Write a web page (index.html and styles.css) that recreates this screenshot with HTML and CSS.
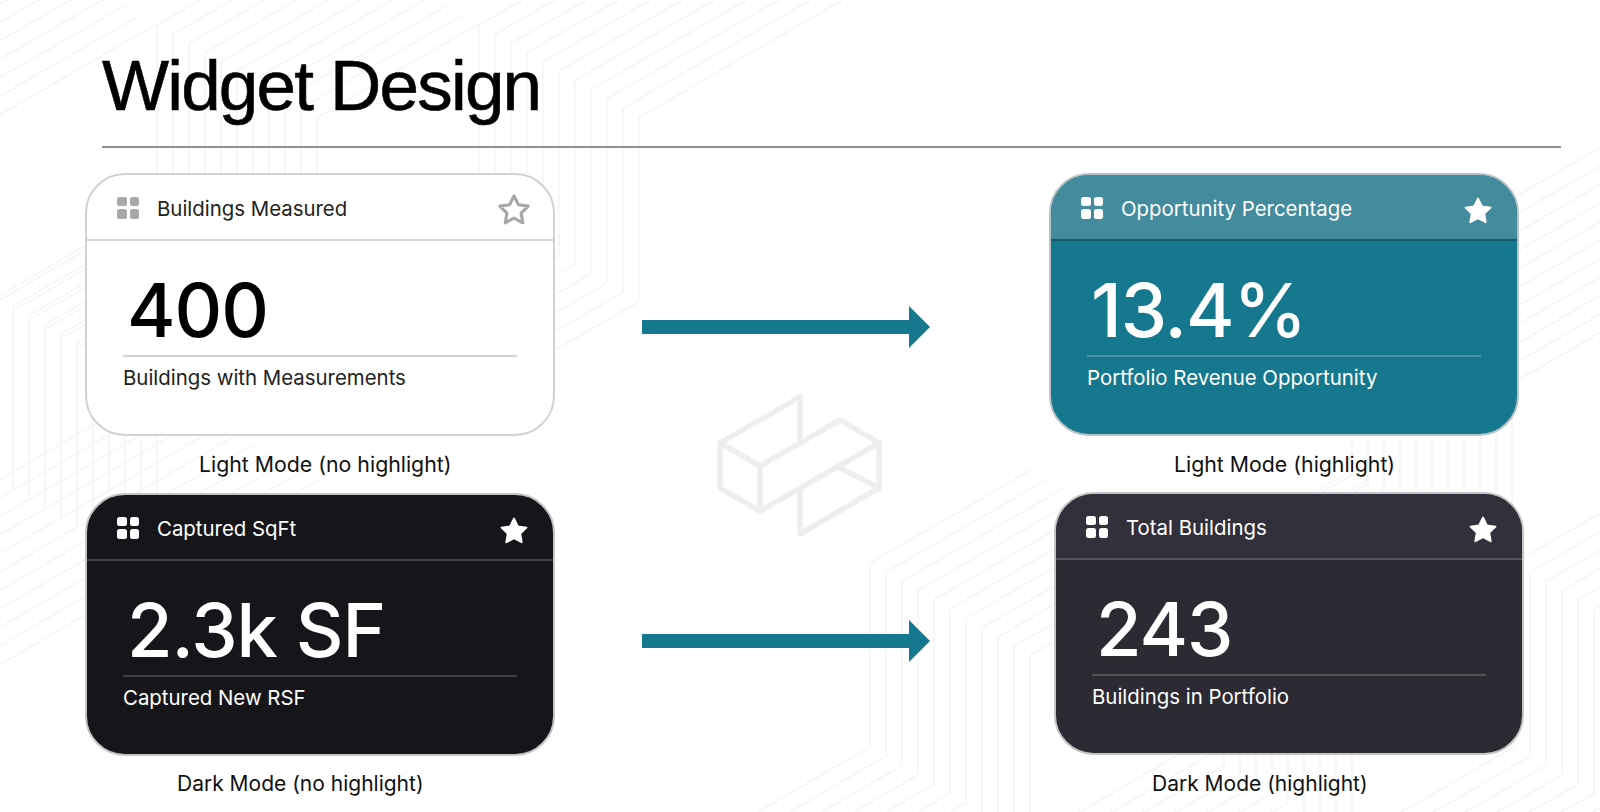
FILE: index.html
```html
<!DOCTYPE html>
<html>
<head>
    <title>Widget Design</title>
    <link rel="stylesheet" href="styles.css">
</head>
<body>
    <!-- background line pattern: one zigzag, repeated into bands of 11 -->
    <svg class="backdrop" width="1600" height="812" viewBox="0 0 1600 812">
        <defs>
            <polyline id="zig" points="161,-93 0,0 0,184 -161,277"/>
            <polyline id="zigLong" points="483,-279 0,0 0,184 -161,277"/>
            <polyline id="tail" points="161,-93 0,0"/>
            <g id="band">
                <use href="#zig"/><use href="#zig" x="16" y="9.25"/><use href="#zig" x="32" y="18.5"/>
                <use href="#zig" x="48" y="27.75"/><use href="#zig" x="64" y="37"/><use href="#zig" x="80" y="46.25"/>
                <use href="#zig" x="96" y="55.5"/><use href="#zig" x="112" y="64.75"/><use href="#zig" x="128" y="74"/>
                <use href="#zig" x="144" y="83.25"/><use href="#zig" x="160" y="92.5"/>
            </g>
            <g id="bandLong">
                <use href="#zigLong"/><use href="#zigLong" x="16" y="9.25"/><use href="#zigLong" x="32" y="18.5"/>
                <use href="#zigLong" x="48" y="27.75"/><use href="#zigLong" x="64" y="37"/><use href="#zigLong" x="80" y="46.25"/>
                <use href="#zigLong" x="96" y="55.5"/><use href="#zigLong" x="112" y="64.75"/><use href="#zigLong" x="128" y="74"/>
                <use href="#zigLong" x="144" y="83.25"/><use href="#zigLong" x="160" y="92.5"/>
            </g>
            <g id="bandTail">
                <use href="#tail"/><use href="#tail" x="16" y="9.25"/><use href="#tail" x="32" y="18.5"/>
                <use href="#tail" x="48" y="27.75"/><use href="#tail" x="64" y="37"/><use href="#tail" x="80" y="46.25"/>
                <use href="#tail" x="96" y="55.5"/><use href="#tail" x="112" y="64.75"/><use href="#tail" x="128" y="74"/>
                <use href="#tail" x="144" y="83.25"/><use href="#tail" x="160" y="92.5"/>
            </g>
        </defs>
        <g class="backdrop-lines">
            <use href="#band" x="-165" y="25"/>
            <use href="#band" x="157" y="25"/>
            <use href="#bandLong" x="479" y="25"/>
            <use href="#band" x="-3" y="297"/>
            <use href="#bandTail" x="-3" y="481"/>
            <use href="#band" x="870" y="563"/>
            <use href="#band" x="1192" y="563"/>
            <use href="#band" x="1514" y="563"/>
            <use href="#bandLong" x="1352" y="291"/>
        </g>
        <!-- faded logo -->
        <g class="backdrop-logo">
            <path d="M800 443V397L720 443V488L760 511V466L720 443"/>
            <path d="M760 466L840 420L879 443L760 511"/>
            <path d="M879 443V488L800 534V488"/>
            <path d="M840 468L879 488"/>
        </g>
    </svg>

    <main class="page">
        <header class="page-head">
            <h1>Widget Design</h1>
        </header>

        <section class="row row-first">
            <div class="cell">
                <article class="card card-light">
                    <div class="card-head">
                        <span class="grid-icon"><i></i><i></i><i></i><i></i></span>
                        <span class="card-title">Buildings Measured</span>
                        <svg class="star star-outline" viewBox="0 0 24 24"><polygon points="12,2 15.09,8.26 22,9.27 17,14.14 18.18,21.02 12,17.77 5.82,21.02 7,14.14 2,9.27 8.91,8.26"/></svg>
                    </div>
                    <div class="card-body">
                        <div class="value">400</div>
                        <div class="caption">Buildings with Measurements</div>
                    </div>
                </article>
                <p class="label label-a">Light Mode (no highlight)</p>
            </div>

            <svg class="arrow arrow-first" width="288" height="42" viewBox="0 0 288 42"><path d="M0 14H267V0L288 21L267 42V28H0Z"/></svg>

            <div class="cell">
                <article class="card card-teal">
                    <div class="card-head">
                        <span class="grid-icon"><i></i><i></i><i></i><i></i></span>
                        <span class="card-title">Opportunity Percentage</span>
                        <svg class="star" viewBox="0 0 24 24"><polygon points="12,2 15.09,8.26 22,9.27 17,14.14 18.18,21.02 12,17.77 5.82,21.02 7,14.14 2,9.27 8.91,8.26"/></svg>
                    </div>
                    <div class="card-body">
                        <div class="value">13.4%</div>
                        <div class="caption">Portfolio Revenue Opportunity</div>
                    </div>
                </article>
                <p class="label label-b">Light Mode (highlight)</p>
            </div>
        </section>

        <section class="row">
            <div class="cell">
                <article class="card card-dark">
                    <div class="card-head">
                        <span class="grid-icon"><i></i><i></i><i></i><i></i></span>
                        <span class="card-title">Captured SqFt</span>
                        <svg class="star" viewBox="0 0 24 24"><polygon points="12,2 15.09,8.26 22,9.27 17,14.14 18.18,21.02 12,17.77 5.82,21.02 7,14.14 2,9.27 8.91,8.26"/></svg>
                    </div>
                    <div class="card-body">
                        <div class="value">2.3k SF</div>
                        <div class="caption">Captured New RSF</div>
                    </div>
                </article>
                <p class="label label-c">Dark Mode (no highlight)</p>
            </div>

            <svg class="arrow arrow-second" width="288" height="42" viewBox="0 0 288 42"><path d="M0 14H267V0L288 21L267 42V28H0Z"/></svg>

            <div class="cell cell-shift">
                <article class="card card-slate">
                    <div class="card-head">
                        <span class="grid-icon"><i></i><i></i><i></i><i></i></span>
                        <span class="card-title">Total Buildings</span>
                        <svg class="star" viewBox="0 0 24 24"><polygon points="12,2 15.09,8.26 22,9.27 17,14.14 18.18,21.02 12,17.77 5.82,21.02 7,14.14 2,9.27 8.91,8.26"/></svg>
                    </div>
                    <div class="card-body">
                        <div class="value">243</div>
                        <div class="caption">Buildings in Portfolio</div>
                    </div>
                </article>
                <p class="label label-d">Dark Mode (highlight)</p>
            </div>
        </section>
    </main>
</body>
</html>
```

FILE: styles.css
```css
* {
    margin: 0;
    padding: 0;
    box-sizing: border-box;
}

html, body {
    width: 1600px;
    height: 812px;
    overflow: hidden;
}

body {
    position: relative;
    font-family: 'Inter', sans-serif;
    color: #111;
    background: #fff;
}

/* Background */
.backdrop {
    position: absolute;
    top: 0;
    left: 0;
}

.backdrop-lines {
    fill: none;
    stroke: #f0f5f6;
    stroke-width: 1.4;
}

.backdrop-logo {
    fill: none;
    stroke: #eeeeee;
    stroke-width: 5.5;
    stroke-linejoin: round;
    stroke-linecap: round;
}

/* Page */
.page {
    position: relative;
    padding-left: 85px;
}

.page-head {
    margin: 0 39px 25px 17px;
    padding-top: 44px;
    border-bottom: 2px solid #8f8f8f;
    height: 148px;
}

h1 {
    font-family: 'Liberation Sans', sans-serif;
    font-size: 71px;
    line-height: 84px;
    font-weight: 400;
    letter-spacing: -1.8px;
    -webkit-text-stroke: 0.6px #000;
    color: #000;
}

.row {
    display: flex;
    align-items: flex-start;
}

.row-first {
    height: 320px;
}

.cell {
    width: 470px;
}

.cell-shift {
    margin-left: 5px;
    margin-top: -1px;
}

.arrow {
    margin-left: 87px;
    margin-right: 119px;
    fill: #16788f;
    flex-shrink: 0;
}

.arrow-first {
    margin-top: 133px;
}

.arrow-second {
    margin-top: 127px;
}

/* Cards */
.card {
    height: 263px;
    border: 2px solid #d2d2d2;
    border-radius: 40px;
    overflow: hidden;
    background: #fff;
}

.card-head {
    display: flex;
    align-items: center;
    height: 66px;
    padding: 0 24px 0 30px;
    border-bottom: 2px solid #d2d2d2;
}

.grid-icon {
    display: grid;
    grid-template-columns: 9.5px 9.5px;
    gap: 3px;
    margin-top: 1px;
    color: #a8a8a8;
}

.grid-icon i {
    height: 9.5px;
    border-radius: 2.5px;
    background: currentColor;
}

.card-title {
    flex: 1;
    margin-left: 18px;
    padding-top: 3px;
    font-size: 20.4px;
    line-height: 28px;
}

.star {
    width: 30px;
    height: 30px;
    margin-top: 8px;
    fill: #fff;
    stroke: #fff;
    stroke-width: 1.5;
    stroke-linejoin: round;
}

.star-outline {
    width: 34px;
    height: 34px;
    margin-right: -2px;
    margin-top: 5px;
    fill: none;
    stroke: #a8a8a8;
    stroke-width: 2.2;
}

.card-body {
    padding: 26px 36px 0 36px;
}

.value {
    height: 90px;
    padding-left: 4px;
    font-size: 74px;
    font-weight: 500;
    line-height: 86px;
    letter-spacing: -1px;
    border-bottom: 2px solid #d2d2d2;
}

.caption {
    margin-top: 7px;
    font-size: 20.4px;
    line-height: 28px;
}

.card-light .value {
    color: #000;
}

.card-light .card-title,
.card-light .caption {
    color: #222;
}

.card-teal {
    background: #16788f;
    color: #fff;
    border-color: #b9c3c6;
}

.card-teal .card-head {
    background: #438b9d;
    border-bottom-color: #115c6e;
}

.card-teal .value {
    border-bottom-color: #4b93a5;
}

.card-dark {
    background: #16161a;
    color: #fff;
    border-color: #c4c4c4;
}

.card-dark .card-head {
    border-bottom-color: #404045;
}

.card-dark .value {
    border-bottom-color: #404045;
}

.card-slate {
    background: #2c2a32;
    color: #fff;
    border-color: #c4c4c4;
}

.card-slate .card-head {
    background: #32303a;
    border-bottom-color: #56555b;
}

.card-slate .value {
    border-bottom-color: #535258;
}

.card-teal .grid-icon,
.card-dark .grid-icon,
.card-slate .grid-icon {
    color: #fff;
}

/* Captions under the cards */
.label {
    margin-top: 14px;
    font-size: 21px;
    line-height: 28px;
    color: #111;
}

.row-first .label {
    margin-top: 14px;
    font-size: 21.3px;
}

.label-a {
    padding-left: 114px;
}

.label-b {
    padding-left: 125px;
}

.label-c {
    padding-left: 92px;
}

.label-d {
    margin-top: 15px;
    padding-left: 98px;
}
```
